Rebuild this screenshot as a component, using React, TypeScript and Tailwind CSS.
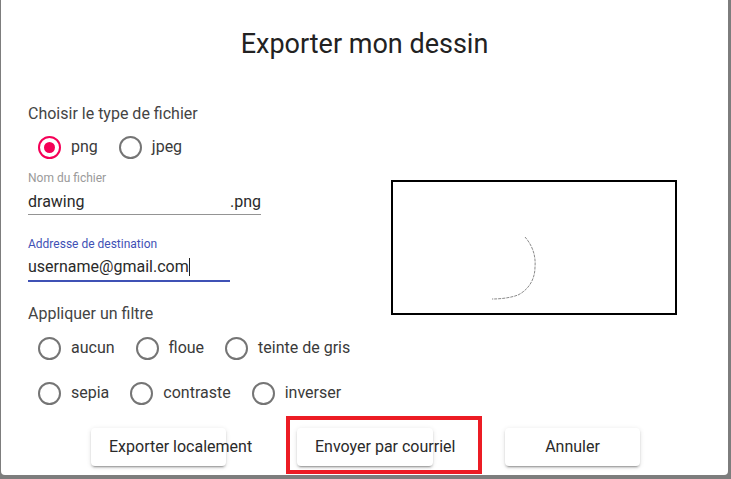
import React from "react";

const font = { fontFamily: "Roboto, 'Liberation Sans', sans-serif" };

const Radio = ({ label, checked = false }: { label: string; checked?: boolean }) => (
  <div className="flex items-center mr-[21px]">
    <span
      className={
        checked
          ? "flex items-center justify-center w-[23px] h-[23px] rounded-full border-[2.3px] border-[#f50057]"
          : "flex items-center justify-center w-[23px] h-[23px] rounded-full border-[2.3px] border-[#757575]"
      }
    >
      {checked && <span className="w-[11px] h-[11px] rounded-full bg-[#f50057]" />}
    </span>
    <span className="ml-[10px] text-[16px] leading-[20px] text-[#3a3a3a]">{label}</span>
  </div>
);

const Btn = ({ children, extra = "" }: { children: string; extra?: string }) => (
  <button
    className={
      "block w-[135px] h-[38px] px-[18px] bg-white rounded-[4px] text-center whitespace-nowrap text-[16px] text-[#2a2a2a] shadow-[0px_3px_1px_-2px_rgba(0,0,0,0.2),0px_2px_2px_0px_rgba(0,0,0,0.14),0px_1px_5px_0px_rgba(0,0,0,0.12)] " +
      extra
    }
  >
    {children}
  </button>
);

const App = () => {
  return (
    <div className="relative w-[731px] h-[479px] bg-[#7d7d7d] overflow-hidden" style={font}>
      {/* Dialog */}
      <div className="ml-[1px] w-[727px] h-[475px] bg-white rounded-b-[4px] flex flex-col">
        <h2 className="mt-[28px] h-[32px] leading-[32px] text-[27px] text-center text-[#222]">
          Exporter mon dessin
        </h2>

        <div className="flex mt-[44px]">
          {/* Form */}
          <div className="w-[390px] pl-[27px] flex flex-col">
            <div className="h-[20px] leading-[20px] text-[16px] text-[#444]">Choisir le type de fichier</div>
            <div className="flex h-[24px] items-center mt-[11px] pl-[10px]">
              <Radio label="png" checked />
              <Radio label="jpeg" />
            </div>

            <div className="mt-[12px] h-[14px] leading-[14px] text-[12px] text-[#9a9a9a]">Nom du fichier</div>
            <div className="mt-[5px] w-[233px] h-[25px] flex items-center justify-between border-b border-[#949494] text-[16px] text-[#2a2a2a]">
              <span>drawing</span>
              <span>.png</span>
            </div>

            <div className="mt-[22px] h-[14px] leading-[14px] text-[12px] text-[#3f51b5]">Addresse de destination</div>
            <div className="mt-[3px] w-[202px] h-[28px] flex items-center border-b-2 border-[#3f51b5] text-[16px] text-[#2a2a2a]">
              <span>username@gmail.com</span>
              <span className="w-px h-[18px] bg-[#222]" />
            </div>

            <div className="mt-[22px] h-[20px] leading-[20px] text-[16px] text-[#444]">Appliquer un filtre</div>
            <div className="flex h-[24px] items-center mt-[12px] pl-[10px]">
              <Radio label="aucun" />
              <Radio label="floue" />
              <Radio label="teinte de gris" />
            </div>
            <div className="flex h-[24px] items-center mt-[21px] pl-[10px]">
              <Radio label="sepia" />
              <Radio label="contraste" />
              <Radio label="inverser" />
            </div>
          </div>

          {/* Preview */}
          <div className="mt-[76px] w-[286px] h-[135px] border-2 border-black bg-white">
            <svg width="282" height="131" viewBox="0 0 282 131">
              <path
                d="M132 55 C139 63, 143 73, 142 85 C142 98, 135 108, 125 113 C117 116, 107 117, 99 117"
                fill="none"
                stroke="#8a8a8a"
                strokeWidth="1"
                strokeDasharray="3 1"
              />
            </svg>
          </div>
        </div>

        <div className="flex gap-[71px] pl-[90px] mt-[23px]">
          <Btn>Exporter localement</Btn>
          <Btn extra="w-[136px]">Envoyer par courriel</Btn>
          <Btn extra="ml-[1px]">Annuler</Btn>
        </div>
      </div>

      {/* annotation highlight */}
      <div className="absolute left-[286px] top-[416px] w-[196px] h-[58px] border-4 border-[#ec1c24]" />
    </div>
  );
};

export default App;
